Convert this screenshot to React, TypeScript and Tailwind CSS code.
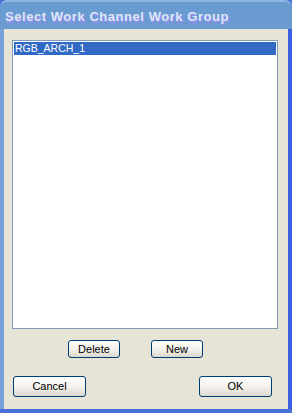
import React from "react";

function XPButton({ label, className }: { label: string; className: string }) {
  return (
    <button
      className={
        "flex items-center justify-center rounded-[3px] border border-[#003c74] bg-gradient-to-b from-[#ffffff] via-[#f4f3ee] to-[#dcd9cb] text-[11px] text-black leading-none " +
        className
      }
      style={{ fontFamily: "'Liberation Sans', Arial, sans-serif", fontSize: "11px" }}
    >
      {label}
    </button>
  );
}

export default function App() {
  return (
    <div className="w-[292px] h-[413px] flex flex-col bg-[#4a6fd8] overflow-hidden" style={{ fontFamily: "'Liberation Sans', sans-serif" }}>
      <div className="h-[29px] shrink-0 rounded-t-[7px] bg-[#6a9bd0] border-t-[2px] border-[#8fb5e4] flex items-center pl-[5px] pt-[2px]">
        <span
          className="text-[13px] font-bold text-[#dde8f7] tracking-[0.55px]"
          style={{ textShadow: "1px 2px 1px #9a8cf0" }}
        >
          Select Work Channel Work Group
        </span>
      </div>
      <div className="flex-1 flex">
        <div className="w-[4px] bg-[#7aa0da]" />
        <div className="flex-1 bg-[#e6e4d6] flex flex-col">
          <div className="ml-[8px] mr-[10px] mt-[11px] h-[289px] border border-[#7f9db9] bg-white p-[1px]">
            <div className="h-[13px] bg-[#316ac5] text-white leading-[13px] pl-[1px]" style={{ fontFamily: "'Liberation Sans', Arial, sans-serif", fontSize: "10.5px" }}>
              RGB_ARCH_1
            </div>
          </div>
          <div className="flex mt-[11px] ml-[64px] gap-[31px]">
            <XPButton label="Delete" className="w-[52px] h-[18px]" />
            <XPButton label="New" className="w-[52px] h-[18px]" />
          </div>
          <div className="flex mt-[18px] ml-[9px] mr-[16px] justify-between">
            <XPButton label="Cancel" className="w-[73px] h-[21px]" />
            <XPButton label="OK" className="w-[73px] h-[21px]" />
          </div>
        </div>
        <div className="w-[4px] bg-[#3d5ee0]" />
      </div>
      <div className="h-[4px] bg-[#4a6fd8]" />
    </div>
  );
}
